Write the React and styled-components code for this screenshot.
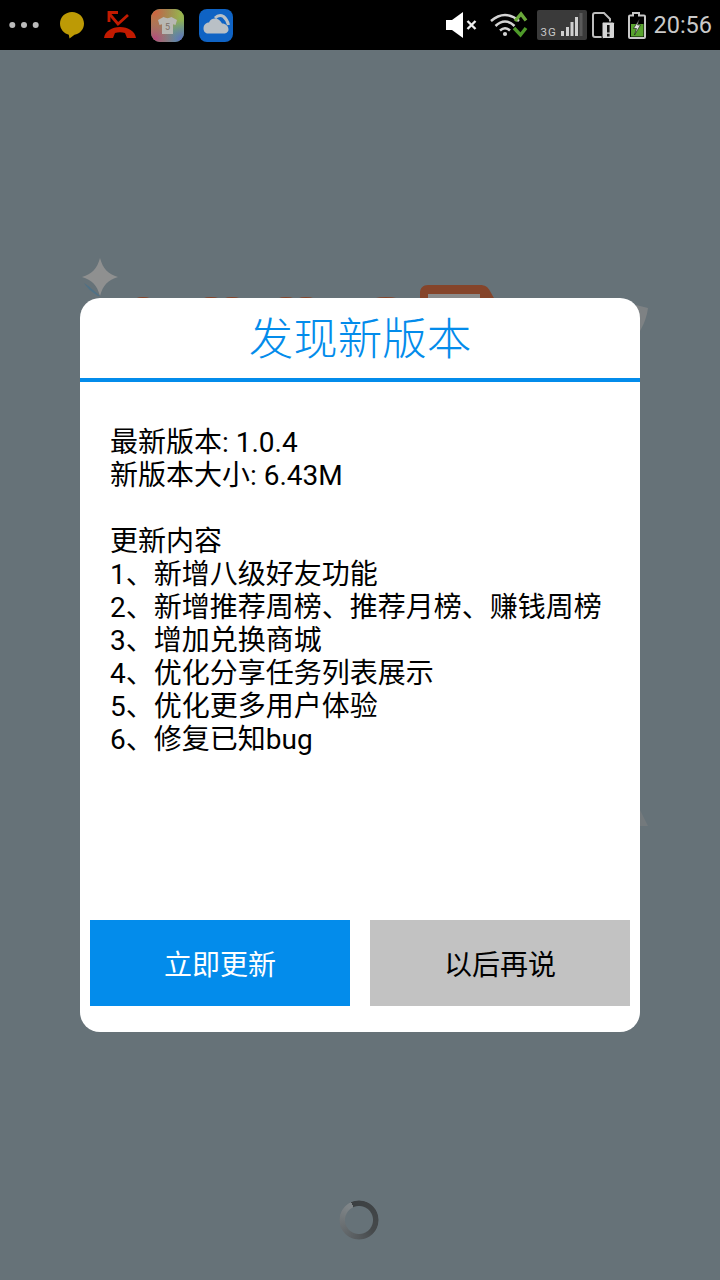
import React from "react";
import styled, { createGlobalStyle } from "styled-components";

const Global = createGlobalStyle`
  html, body { margin: 0; padding: 0; background: #667278; }
  body { font-family: Roboto, "Noto Sans CJK SC", sans-serif; }
  * { box-sizing: border-box; }
`;
const Page = styled.div`
  width: 720px; height: 1280px; display: flex; flex-direction: column; overflow: hidden; position: relative; background: #667278;
`;
const StatusBar = styled.div`
  height: 50px; flex: none; background: #000; display: flex; align-items: center; justify-content: space-between;
`;
const Tray = styled.div`
  display: flex; align-items: center; height: 50px;
`;
const Icon = styled.svg`
  flex: none; display: block; height: 50px; width: ${p => p.$w}px; margin-left: ${p => p.$gap || 0}px;
`;
const Clock = styled.span`
  font-size: 23.5px; color: #c9c9c9; margin-left: 5px; margin-right: 8px; line-height: 50px; font-family: Roboto, sans-serif;
`;
const Stage = styled.div`
  flex: 1; display: flex; align-items: center; justify-content: center; position: relative;
`;
const Backdrop = styled.svg`
  position: absolute; left: 0; top: -50px; width: 720px; height: 1280px;
`;
const Dialog = styled.div`
  width: 560px; height: 734px; background: #fff; border-radius: 20px; display: flex; flex-direction: column; position: relative; overflow: hidden;
`;
const Title = styled.h1`
  margin: 0; height: 84px; flex: none; border-bottom: 4px solid #038ceb; color: #038ceb; font-size: 44.5px; font-weight: 300; line-height: 85px; text-align: center;
`;
const Body = styled.div`
  flex: 1; padding: 44px 30px 0; font-size: 28px; line-height: 33px; color: #000; white-space: pre-line;
`;
const Actions = styled.div`
  display: flex; gap: 20px; padding: 0 10px 26px;
`;
const Button = styled.button`
  flex: 1; height: 86px; border: 0; padding: 0; font: inherit; font-size: 28px; background: ${p => (p.$primary ? "#038ceb" : "#c2c2c2")}; color: ${p => (p.$primary ? "#fff" : "#000")};
`;
const Spinner = styled.div`
  position: absolute; left: 339px; top: 1150px; width: 40px; height: 40px; border-radius: 50%;
  background: conic-gradient(from -24deg, #3b3f41 0deg, #45494b 150deg, #5c6164 230deg, #7f8588 345deg, #7f8588 360deg);
  -webkit-mask: radial-gradient(circle, transparent 13.5px, #000 14.5px, #000 19px, transparent 20px);
  mask: radial-gradient(circle, transparent 13.5px, #000 14.5px, #000 19px, transparent 20px);
`;

const Dots = () => (
  <Icon $w={50} viewBox="0 0 50 50">
    <circle cx="12.300" cy="25" r="3" fill="#bbb" /><circle cx="24" cy="25" r="3" fill="#bbb" /><circle cx="35.700" cy="25" r="3" fill="#bbb" />
  </Icon>
);
const Bubble = () => (
  <Icon $w={32} $gap={6} viewBox="56 0 32 50">
    <path d="M72 12c6.800 0 12 5 12 11.500 0 6-4.400 10.400-9.500 11.300L69.500 38.500l-.7-3.800C63.700 33.400 60 29 60 23.500 60 17 65.200 12 72 12z" fill="#bd9a05" />
  </Icon>
);
const Missed = () => (
  <Icon $w={40} $gap={12} viewBox="100 0 40 50">
    <path d="M104 38C105 31 112 27 120 27S135 31 136 38H127L125 33C122 32 118 32 115 33L113 38Z" fill="#c21a00" />
    <path d="M128 15l-10 9-8.500-10" fill="none" stroke="#c21a00" strokeWidth="2.800" />
    <path d="M109 22v-9.500h9" fill="none" stroke="#c21a00" strokeWidth="2.800" />
  </Icon>
);
const Theme = () => (
  <Icon $w={40} $gap={8} viewBox="148 0 40 50">
    <defs>
      <radialGradient id="thTL" cx=".1" cy=".1" r=".8"><stop offset="0" stopColor="#d0633e" /><stop offset="1" stopColor="#d0633e" stopOpacity="0" /></radialGradient>
      <radialGradient id="thTR" cx=".9" cy=".15" r=".7"><stop offset="0" stopColor="#9db34a" /><stop offset="1" stopColor="#9db34a" stopOpacity="0" /></radialGradient>
      <radialGradient id="thBR" cx=".95" cy=".95" r=".6"><stop offset="0" stopColor="#5f6fc0" /><stop offset="1" stopColor="#5f6fc0" stopOpacity="0" /></radialGradient>
      <radialGradient id="thBL" cx=".1" cy=".9" r=".65"><stop offset="0" stopColor="#b8487c" /><stop offset="1" stopColor="#b8487c" stopOpacity="0" /></radialGradient>
    </defs>
    <rect x="151" y="9" width="33" height="33" rx="9" fill="#6aa773" />
    <rect x="151" y="9" width="33" height="33" rx="9" fill="url(#thTR)" />
    <rect x="151" y="9" width="33" height="33" rx="9" fill="url(#thBR)" />
    <rect x="151" y="9" width="33" height="33" rx="9" fill="url(#thBL)" />
    <rect x="151" y="9" width="33" height="33" rx="9" fill="url(#thTL)" />
    <path d="M163.500 17c2.500 1.500 5.500 1.500 8 0l5.500 3-1.500 5-2.500-.8V34h-11v-9.800l-2.500.8-1.500-5z" fill="#b8b8b4" />
    <text x="167.500" y="29.500" fontSize="9" fill="#7c6f68" textAnchor="middle" fontFamily="Roboto">5</text>
  </Icon>
);
const Cloud = () => (
  <Icon $w={40} $gap={8} viewBox="196 0 40 50">
    <rect x="199" y="9" width="34" height="33" rx="8" fill="#0f63c4" />
    <path d="M208 33.500C205 33.500 203.500 31 203.500 28.500 203.500 25 206 22.500 209 22.500 210 19.500 213 18 216 18.500 219 19 221 21.500 222 23.500 225.500 23.500 228.500 26 228.500 29.500 228.500 32 226 33.500 224 33.500Z" fill="#b9c0c6" />
    <path d="M215 18C217.500 15.500 221 15 223.500 16.500 226 18.500 227.500 21 228.500 25" fill="none" stroke="#b9c0c6" strokeWidth="3" />
  </Icon>
);
const Mute = () => (
  <Icon $w={35} viewBox="445 0 35 50">
    <path d="M447 20h6l11-8v26l-11-8h-6z" fill="#fff" />
    <path d="M468.500 21l8 8m0-8l-8 8" stroke="#eee" strokeWidth="2.400" />
  </Icon>
);
const Wifi = () => (
  <Icon $w={42} $gap={8} viewBox="488 0 42 50">
    <g fill="none" stroke="#d4d4d4" strokeWidth="2.500">
      <path d="M492 21Q506 9 520 21" /><path d="M496.500 26Q506 17 515.500 26" /><path d="M501 30.500Q506 26 511 30.500" />
    </g>
    <circle cx="506" cy="34" r="2.100" fill="#d4d4d4" />
    <path d="M516 21l6-7 5 6.500" fill="none" stroke="#6aa83a" strokeWidth="3.400" />
    <path d="M515 28l6.500 7 5.500-7" fill="none" stroke="#4e9a2a" strokeWidth="3.400" />
  </Icon>
);
const Signal = () => (
  <Icon $w={54} $gap={6} viewBox="536 0 54 50">
    <rect x="538" y="10" width="50" height="30" rx="2" fill="#3a3a3a" />
    <text x="541.500" y="36" fontSize="11.500" fill="#c8c8c8" fontFamily="Roboto" letterSpacing="1">3G</text>
    <path d="M562 31h3v5h-3zM567 27h3v9h-3zM571.500 22h3v14h-3zM576 17h3v19h-3z" fill="#d0d0d0" />
    <path d="M580.500 13h3v23h-3z" fill="#5a5a5a" />
  </Icon>
);
const Sim = () => (
  <Icon $w={28} $gap={1} viewBox="591 0 28 50">
    <path d="M594 15a2 2 0 0 1 2-2h9l6 6v18h-15a2 2 0 0 1-2-2z" fill="none" stroke="#bdbdbd" strokeWidth="2" />
    <rect x="603" y="22" width="12.500" height="16.500" rx="1.500" stroke="#000" fill="#d6d6d6" />
    <path d="M608 25h2.600v7.500H608zM608 33.800h2.600v2.700H608z" fill="#111" />
  </Icon>
);
const Battery = () => (
  <Icon $w={22} $gap={8} viewBox="627 0 22 50">
    <path d="M634 13h6v2.500h5a1 1 0 0 1 1 1V37a1 1 0 0 1-1 1h-14a1 1 0 0 1-1-1V16.500a1 1 0 0 1 1-1h3z" fill="none" stroke="#c8c8c8" strokeWidth="2" />
    <rect x="632" y="24" width="12.500" height="12.500" fill="#58a32e" />
    <path d="M640.500 19l-6 9.500h3l-2 6.500 6-10h-3z" fill="#e2e2e2" stroke="#111" strokeWidth=".6" />
  </Icon>
);

const notes = `最新版本: 1.0.4
新版本大小: 6.43M

更新内容
1、新增八级好友功能
2、新增推荐周榜、推荐月榜、赚钱周榜
3、增加兑换商城
4、优化分享任务列表展示
5、优化更多用户体验
6、修复已知bug`;

export default function App() {
  return (
    <Page>
      <Global />
      <StatusBar>
        <Tray>
          <Dots />
          <Bubble />
          <Missed />
          <Theme />
          <Cloud />
        </Tray>
        <Tray>
          <Mute />
          <Wifi />
          <Signal />
          <Sim />
          <Battery />
          <Clock>20:56</Clock>
        </Tray>
      </StatusBar>
      <Stage>
        <Backdrop viewBox="0 0 720 1280">
          <path d="M100 258c3 11 8 16 18 19-10 3-15 8-18 19-3-11-8-16-18-19 10-3 15-8 18-19z" fill="#8f9090" />
          <path d="M84 283c5 3 9 7 16 13l-2 0c-6-4-11-8-14-13z" fill="#4f7186" />
          <path d="M420 300v-7c0-5 3-8 8-8h52c5 0 8 2 10 6l5 9z" fill="#85442a" />
          <rect x="428" y="294" width="52" height="8" fill="#8b8b8b" />
          <g fill="#85442a">
            <ellipse cx="143" cy="301" rx="10" ry="4" /><ellipse cx="211" cy="301" rx="11" ry="4" /><ellipse cx="232" cy="301" rx="11" ry="4" /><ellipse cx="286" cy="301" rx="11" ry="4" /><ellipse cx="306" cy="301" rx="11" ry="4" /><ellipse cx="386" cy="301" rx="16" ry="4" />
          </g>
          <path d="M636 305l12 3c-1 8-4 17-10 26z" fill="#7e8284" />
          <path d="M638 806l10 20-10 0z" fill="#73797c" />
        </Backdrop>
        <Dialog>
          <Title>发现新版本</Title>
          <Body>{notes}</Body>
          <Actions>
            <Button $primary>立即更新</Button>
            <Button>以后再说</Button>
          </Actions>
        </Dialog>
        <Spinner />
      </Stage>
    </Page>
  );
}
